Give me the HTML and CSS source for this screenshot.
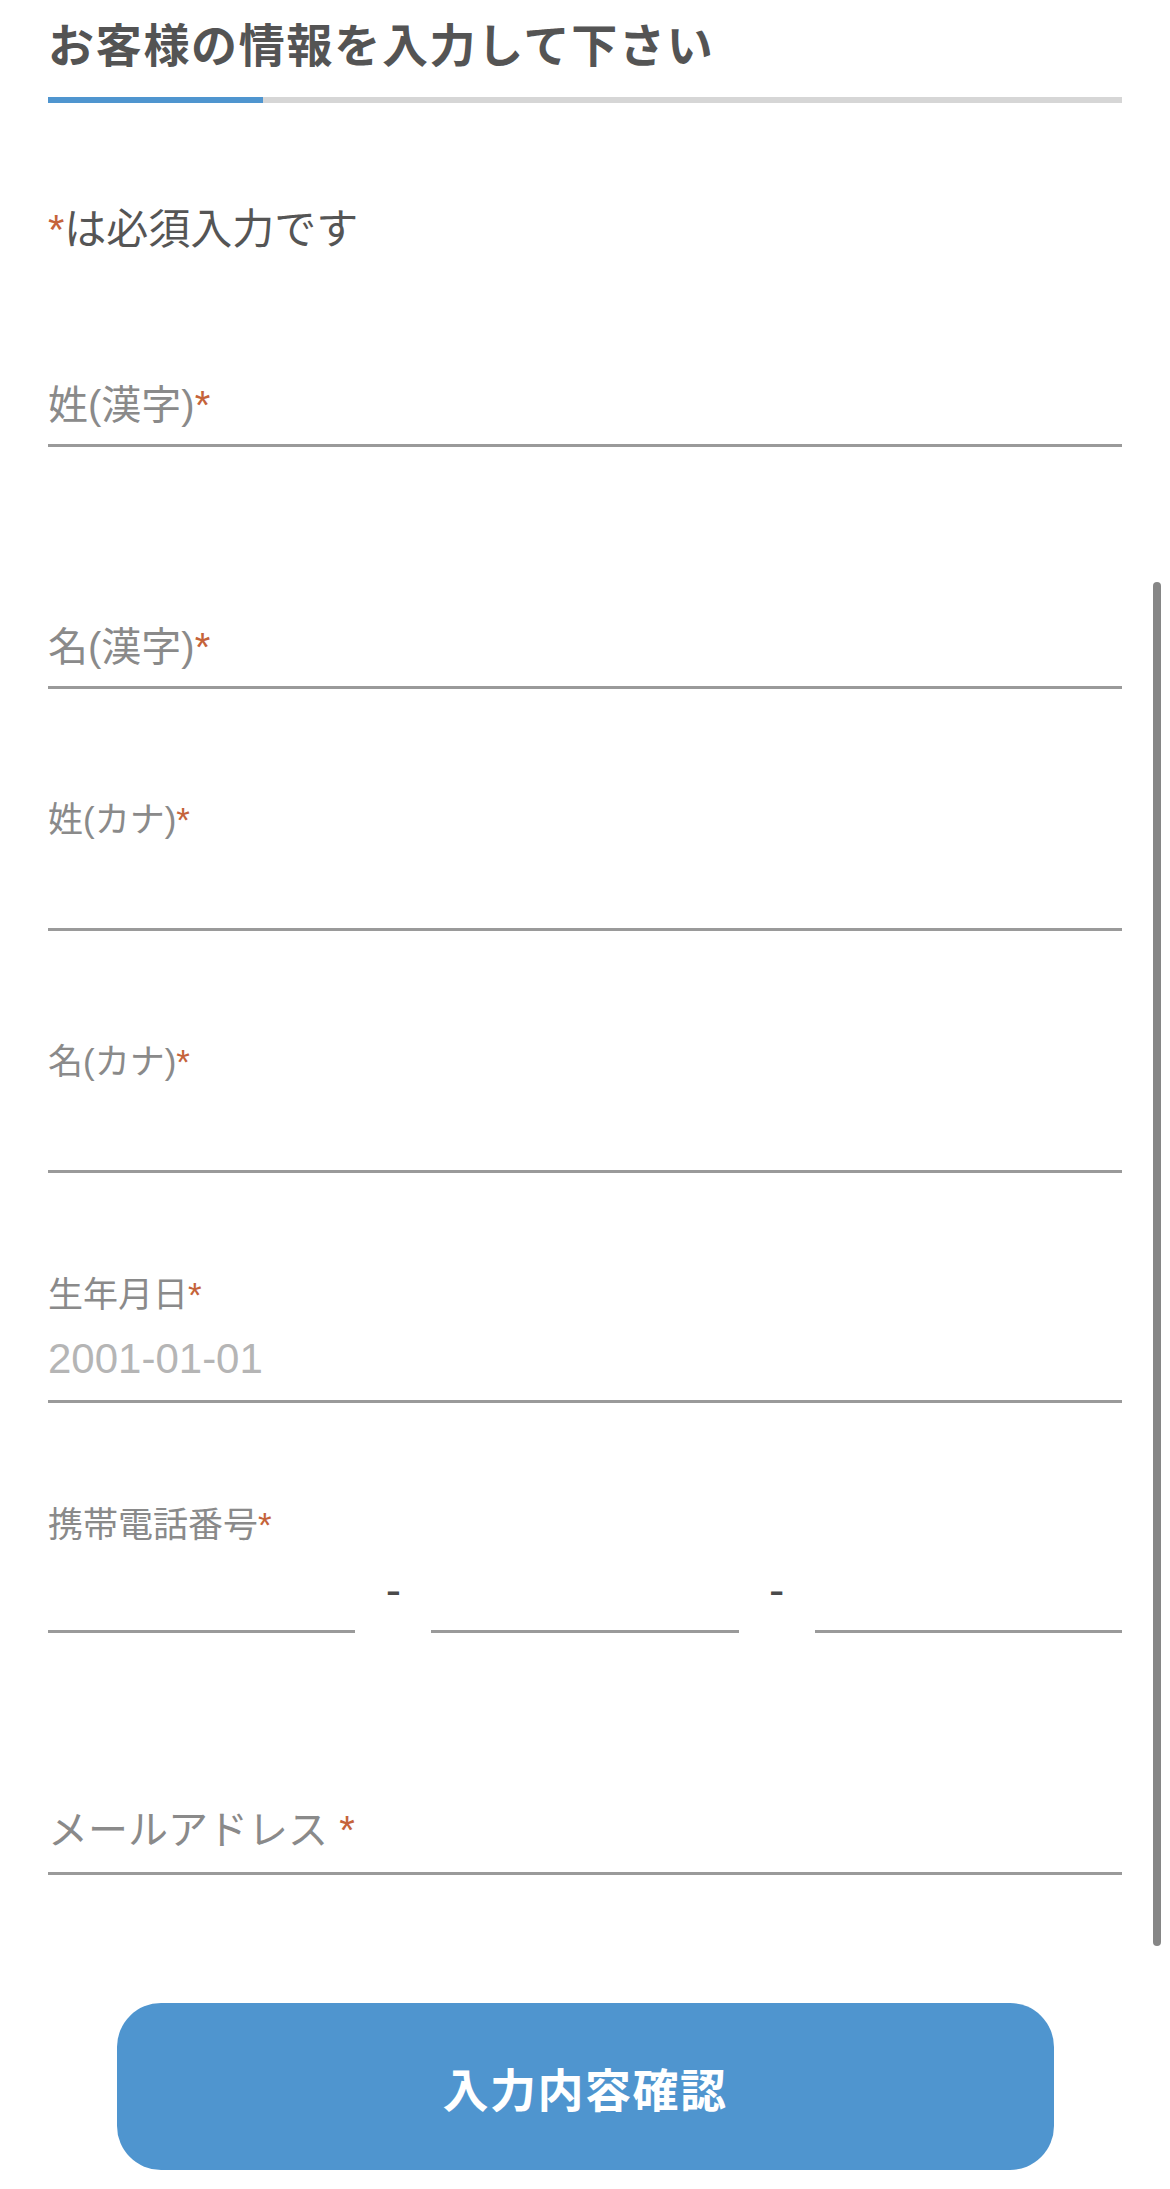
FILE: index.html
```html
<!DOCTYPE html>
<html lang="ja">
<head>
    <meta charset="UTF-8">
    <meta name="viewport" content="width=device-width, initial-scale=1.0">
    <title>お客様情報入力</title>
    <link rel="stylesheet" href="styles.css">
</head>
<body>

    <div class="entry-page">
        <h1 class="page-title">お客様の情報を入力して下さい</h1>

        <div class="progress">
            <div class="progress-bar" style="width: 20%;"></div>
        </div>

        <p class="required-note"><span class="req">*</span>は必須入力です</p>

        <form id="entryForm" class="entry-form">
            <div class="field field-placeholder">
                <label class="field-label" for="seiKanji">姓(漢字)<span class="req">*</span></label>
                <input class="field-input" type="text" id="seiKanji" name="seiKanji">
            </div>

            <div class="field field-placeholder">
                <label class="field-label" for="meiKanji">名(漢字)<span class="req">*</span></label>
                <input class="field-input" type="text" id="meiKanji" name="meiKanji">
            </div>

            <div class="field">
                <label class="field-label" for="seiKana">姓(カナ)<span class="req">*</span></label>
                <input class="field-input" type="text" id="seiKana" name="seiKana">
            </div>

            <div class="field">
                <label class="field-label" for="meiKana">名(カナ)<span class="req">*</span></label>
                <input class="field-input" type="text" id="meiKana" name="meiKana">
            </div>

            <div class="field field-compact">
                <label class="field-label" for="birthday">生年月日<span class="req">*</span></label>
                <input class="field-input" type="text" id="birthday" name="birthday" placeholder="2001-01-01">
            </div>

            <div class="field field-compact">
                <label class="field-label" for="tel1">携帯電話番号<span class="req">*</span></label>
                <div class="tel-row">
                    <input class="field-input" type="tel" id="tel1" name="tel1">
                    <span class="tel-sep">-</span>
                    <input class="field-input" type="tel" id="tel2" name="tel2">
                    <span class="tel-sep">-</span>
                    <input class="field-input" type="tel" id="tel3" name="tel3">
                </div>
            </div>

            <div class="field field-placeholder field-mail">
                <label class="field-label" for="email">メールアドレス <span class="req">*</span></label>
                <input class="field-input" type="email" id="email" name="email">
            </div>

            <div class="submit-container">
                <button type="button" class="confirm-btn">入力内容確認</button>
            </div>
        </form>

        <div class="scroll-thumb"></div>
    </div>

</body>
</html>
```

FILE: styles.css
```css
body {
    font-family: "Liberation Sans", "Noto Sans CJK JP", sans-serif;
    background-color: #fff;
    margin: 0;
}

.entry-page {
    position: relative;
    padding: 16px 48px 19px 48px;
}

.page-title {
    margin: 0;
    font-size: 46px;
    line-height: 60px;
    letter-spacing: 1.7px;
    font-weight: bold;
    color: #545454;
}

.progress {
    margin-top: 21px;
    height: 6px;
    background-color: #d6d6d6;
}

.progress-bar {
    height: 100%;
    background-color: #4f95cf;
}

.required-note {
    margin: 97px 0 0;
    font-size: 42px;
    line-height: 60px;
    color: #555;
}

.req {
    color: #c5633a;
}

.entry-form {
    display: flex;
    flex-direction: column;
    margin-top: 54px;
}

.field {
    display: grid;
    grid-template-rows: 44px 89px;
    margin-top: 109px;
}

.field:first-child {
    margin-top: 0;
}

.field-label {
    grid-row: 1;
    grid-column: 1;
    font-size: 35px;
    line-height: 44px;
    color: #8a8a8a;
}

.field-input {
    grid-row: 2;
    grid-column: 1;
    box-sizing: border-box;
    width: 100%;
    height: 100%;
    margin: 0;
    padding: 0;
    border: none;
    border-bottom: 3px solid #9a9a9a;
    border-radius: 0;
    background: transparent;
    font: inherit;
    font-size: 42px;
    color: #555;
    outline: none;
}

.field-input::placeholder {
    color: #b5b5b5;
}

/* label still sitting inside the empty input */
.field-placeholder .field-label {
    grid-row: 2;
    align-self: end;
    margin-bottom: 12px;
    font-size: 40px;
    line-height: 60px;
    pointer-events: none;
}

.field-mail .field-label {
    margin-bottom: 15px;
}

.field-compact {
    grid-template-rows: 44px 86px;
    margin-top: 100px;
}

.tel-row {
    grid-row: 2;
    display: flex;
    align-items: center;
}

.tel-row .field-input {
    flex: 1;
    min-width: 0;
}

.tel-sep {
    width: 76px;
    text-align: center;
    font-size: 46px;
    line-height: 1;
    color: #4a4a4a;
}

.submit-container {
    display: flex;
    justify-content: center;
    margin-top: 128px;
}

.confirm-btn {
    width: 937px;
    height: 167px;
    border: none;
    border-radius: 44px;
    background-color: #4f95cf;
    color: #fff;
    font-family: inherit;
    font-size: 46px;
    font-weight: bold;
    letter-spacing: 1.5px;
    cursor: pointer;
}

.confirm-btn:hover {
    background-color: #4488c2;
}

.scroll-thumb {
    position: absolute;
    top: 582px;
    right: 9px;
    width: 8px;
    height: 1364px;
    border-radius: 4px;
    background-color: #868686;
}
```
